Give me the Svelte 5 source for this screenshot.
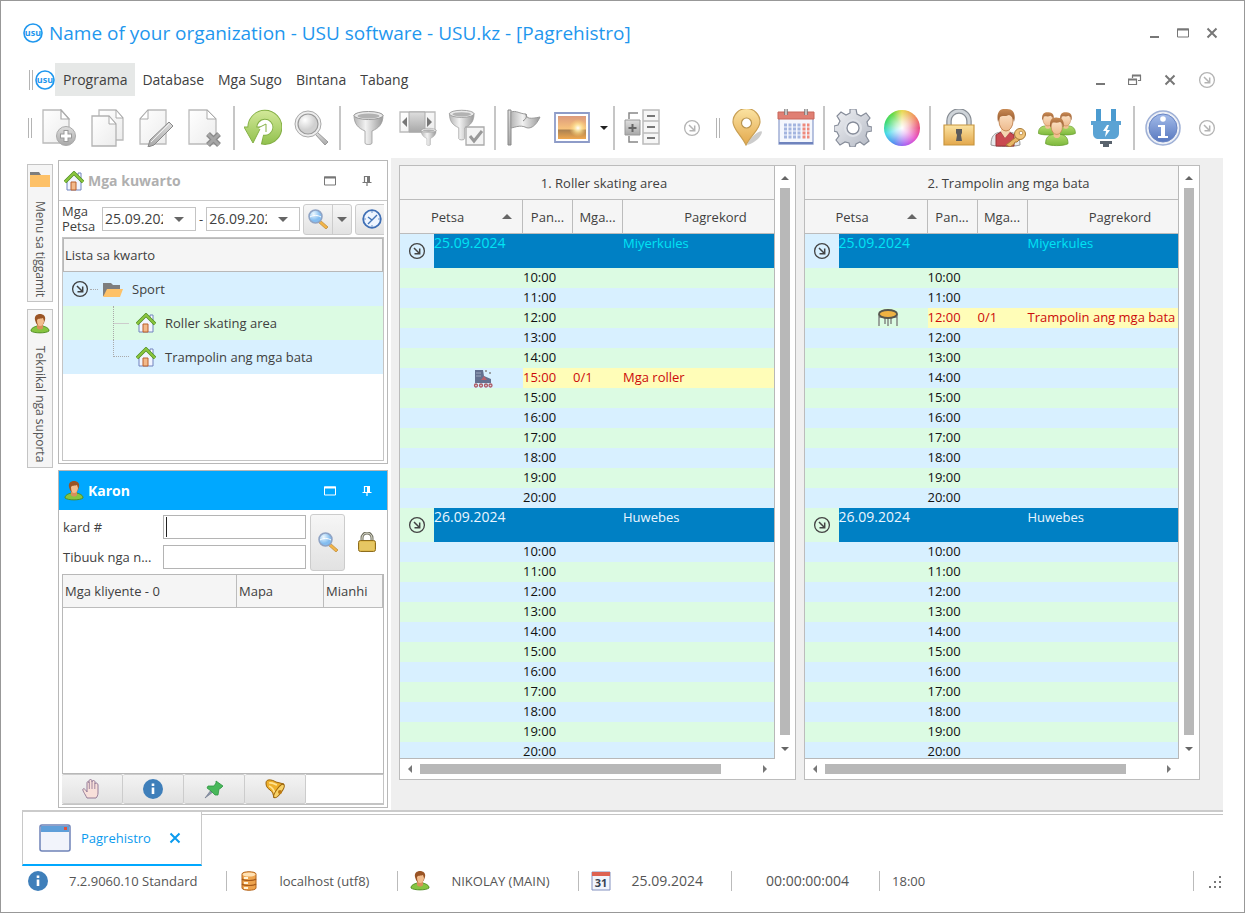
<script lang="ts">
  type Slot = { time: string; count?: string; note?: string; icon?: string };
  type Day = { date: string; weekday: string; today: boolean; slots: Slot[] };
  type Room = { id: number; title: string; days: Day[] };

  const menus = ['Programa', 'Database', 'Mga Sugo', 'Bintana', 'Tabang'];

  const mainTools = [
    ['new', 'copy', 'edit', 'delete'],
    ['refresh', 'search'],
    ['filter', 'filterColumn', 'filterCheck'],
    ['flag', 'picture'],
    ['tree', 'more']
  ];

  const serviceTools = [
    ['pin', 'calendar'],
    ['gear', 'wheel'],
    ['lock', 'userKey', 'users', 'plug'],
    ['info']
  ];

  const footerTools = ['hand', 'infoFlat', 'pushpin', 'bell'];

  function hours(booked?: Slot): Slot[] {
    const list: Slot[] = [];
    for (let h = 10; h <= 20; h++) {
      const time = `${h}:00`;
      if (booked && booked.time === time) list.push(booked);
      list.push({ time });
    }
    return list;
  }

  function makeDays(booked: Slot): Day[] {
    return [
      { date: '25.09.2024', weekday: 'Miyerkules', today: true, slots: hours(booked) },
      { date: '26.09.2024', weekday: 'Huwebes', today: false, slots: hours() }
    ];
  }

  const rooms: Room[] = [
    {
      id: 1,
      title: 'Roller skating area',
      days: makeDays({ time: '15:00', count: '0/1', note: 'Mga roller', icon: 'skate' })
    },
    {
      id: 2,
      title: 'Trampolin ang mga bata',
      days: makeDays({ time: '12:00', count: '0/1', note: 'Trampolin ang mga bata', icon: 'trampoline' })
    }
  ];

  let dateFrom = $state('25.09.2024');
  let dateTo = $state('26.09.2024');
  let cardNumber = $state('');
  let fullName = $state('');
  let treeOpen = $state(true);
</script>

<!-- shared gradients for the icons -->
<svg class="defs" width="0" height="0" aria-hidden="true">
  <defs>
    <linearGradient id="paper" x1="0" y1="0" x2="1" y2="1"><stop offset="0" stop-color="#fff" /><stop offset="1" stop-color="#ececec" /></linearGradient>
    <linearGradient id="steel" x1="0" y1="0" x2="1" y2="0"><stop offset="0" stop-color="#b5b5b5" /><stop offset=".4" stop-color="#f2f2f2" /><stop offset="1" stop-color="#999" /></linearGradient>
    <linearGradient id="grey" x1="0" y1="0" x2="0" y2="1"><stop offset="0" stop-color="#dedede" /><stop offset="1" stop-color="#a8a8a8" /></linearGradient>
    <linearGradient id="green" x1="0" y1="0" x2="0" y2="36" gradientUnits="userSpaceOnUse"><stop offset="0" stop-color="#d5ea9c" /><stop offset="1" stop-color="#90c04c" /></linearGradient>
    <linearGradient id="gold" x1="0" y1="0" x2="0" y2="1"><stop offset="0" stop-color="#fbe3a2" /><stop offset="1" stop-color="#e3a84c" /></linearGradient>
    <linearGradient id="gear" x1="0" y1="0" x2="1" y2="1"><stop offset="0" stop-color="#f0f1f4" /><stop offset="1" stop-color="#b4b9c4" /></linearGradient>
    <linearGradient id="blue" x1="0" y1="0" x2="0" y2="1"><stop offset="0" stop-color="#a4bcea" /><stop offset="1" stop-color="#5878bf" /></linearGradient>
    <linearGradient id="shirt" x1="0" y1="0" x2="0" y2="1"><stop offset="0" stop-color="#b2dc6c" /><stop offset="1" stop-color="#7db83c" /></linearGradient>
    <linearGradient id="hair" x1="0" y1="0" x2="0" y2="1"><stop offset="0" stop-color="#c98b55" /><stop offset="1" stop-color="#94572c" /></linearGradient>
    <linearGradient id="skin" x1="0" y1="0" x2="0" y2="1"><stop offset="0" stop-color="#fde6cb" /><stop offset="1" stop-color="#edb98c" /></linearGradient>
    <linearGradient id="sunset" x1="0" y1="0" x2="0" y2="1"><stop offset="0" stop-color="#dc9a7c" /><stop offset=".55" stop-color="#f7c27c" /><stop offset=".62" stop-color="#ad8352" /><stop offset="1" stop-color="#efa850" /></linearGradient>
    <radialGradient id="glow"><stop offset="0" stop-color="#fff" /><stop offset=".4" stop-color="#ffe9a0" stop-opacity=".8" /><stop offset="1" stop-color="#ffd070" stop-opacity="0" /></radialGradient>
    <radialGradient id="lens" cx=".35" cy=".3"><stop offset="0" stop-color="#fff" /><stop offset="1" stop-color="#d0d0d0" /></radialGradient>
    <radialGradient id="lensBlue" cx=".35" cy=".3"><stop offset="0" stop-color="#eef9ff" /><stop offset="1" stop-color="#83bdf0" /></radialGradient>
  </defs>
</svg>

{#snippet logo()}
  <svg class="logo" width="20" height="20" viewBox="0 0 20 20" aria-hidden="true">
    <circle cx="10" cy="10" r="9" fill="#fff" stroke="#1f97ee" stroke-width="1.6" />
    <text x="10" y="13" text-anchor="middle" font-size="9" font-weight="bold" fill="#1f97ee">usu</text>
  </svg>
{/snippet}

{#snippet circleArrow()}
  <svg width="18" height="18" viewBox="0 0 18 18" aria-hidden="true" fill="none" stroke="currentColor">
    <circle cx="9" cy="9" r="7.4" stroke-width="1.3" />
    <path d="M6 6l5 5M11.7 6.5v5.2H6.5" stroke-width="1.5" />
  </svg>
{/snippet}

{#snippet funnel()}
  <path d="M4 6c0 9 4 13 11 16v12c0 2 7 2 7 0V22c7-3 11-7 11-16z" fill="url(#steel)" stroke="#999" stroke-width=".8" />
  <ellipse cx="18.5" cy="6.5" rx="14.5" ry="4" fill="#e9e9e9" stroke="#999" />
  <ellipse cx="18.5" cy="7" rx="11" ry="2.4" fill="#b2b2b2" />
{/snippet}

{#snippet person()}
  <path d="M2 33c0-7 3-10 9-11h10c6 1 9 4 9 11-6 3-22 3-28 0z" fill="url(#shirt)" stroke="#679e2d" />
  <path d="M12 20h8v4c-2 3-6 3-8 0z" fill="#f0c193" />
  <ellipse cx="16" cy="13" rx="7" ry="9" fill="url(#skin)" stroke="#b8763f" stroke-width=".7" />
  <path d="M8 14C6 4 11 1 17 2c7 0 9 6 7 12-1-4-1-6-4-7-4 2-8 0-10 1-1 2-1 4-2 6z" fill="url(#hair)" />
{/snippet}

{#snippet toolIcon(name: string)}
  <svg width="38" height="38" viewBox="0 0 38 38" aria-hidden="true">
    {#if name === 'new'}
      <path d="M3 1h18l8 9v24H3z" fill="url(#paper)" stroke="#bbb" stroke-width="1.3" />
      <path d="M21 1v9h8z" fill="#fff" stroke="#aaa" stroke-width="1.2" />
      <circle cx="26" cy="27" r="9.5" fill="url(#grey)" stroke="#aaa" />
      <path d="M26 21v12M20 27h12" stroke="#999" stroke-width="5" />
      <path d="M26 22v10M21 27h10" stroke="#fff" stroke-width="3" />
    {:else if name === 'copy'}
      <path d="M10 1h17l7 8v22H10z" fill="url(#paper)" stroke="#bbb" stroke-width="1.3" />
      <path d="M27 1v8h7z" fill="#fff" stroke="#aaa" />
      <path d="M3 7h17l7 8v22H3z" fill="url(#paper)" stroke="#b3b3b3" stroke-width="1.3" />
      <path d="M20 7v8h7z" fill="#fff" stroke="#aaa" />
    {:else if name === 'edit'}
      <path d="M10 1h18v34H2V10z" fill="url(#paper)" stroke="#bbb" stroke-width="1.3" />
      <path d="M10 1v9H2z" fill="#fff" stroke="#aaa" />
      <path d="M31 13l4 4-19 19-6 2 2-7z" fill="url(#grey)" stroke="#888" />
      <path d="M31 15L13 33" stroke="#eee" />
    {:else if name === 'delete'}
      <path d="M2 1h18l9 9v25H2z" fill="url(#paper)" stroke="#bbb" stroke-width="1.3" />
      <path d="M20 1v9h9z" fill="#fff" stroke="#aaa" />
      <path d="M21 25l11 11M32 25L21 36" stroke="#8a8a8a" stroke-width="5.5" />
      <path d="M21 25l11 11M32 25L21 36" stroke="#a6a6a6" stroke-width="3" />
    {:else if name === 'refresh'}
      <path d="M8.500 20a12.500 12.500 0 1 1 9.500 10.500" fill="none" stroke="#85b046" stroke-width="10" />
      <path d="M0 18h17L9 34z" fill="url(#green)" stroke="#85b046" />
      <path d="M8.500 20a12.500 12.500 0 1 1 10.500 10.500" fill="none" stroke="url(#green)" stroke-width="8" />
      <path d="M14 19l8-4v8" fill="#fff" stroke="#85b046" />
    {:else if name === 'search'}
      <path d="M24 23l11 10-3 3-10-11z" fill="url(#grey)" stroke="#999" />
      <circle cx="15" cy="15" r="13" fill="#eee" stroke="#aaa" />
      <circle cx="15" cy="15" r="10" fill="url(#lens)" stroke="#999" stroke-width="1.2" />
    {:else if name === 'filter'}
      {@render funnel()}
    {:else if name === 'filterColumn'}
      <path d="M1 3h35v20H1z" fill="url(#paper)" stroke="#bbb" stroke-width="1.3" />
      <path d="M10 3h16v20H10z" fill="url(#grey)" stroke="#aaa" />
      <path d="M8 8v10l-5-5zM28 8v10l5-5z" fill="#777" />
      <g transform="translate(20 18) scale(.52)">{@render funnel()}</g>
    {:else if name === 'filterCheck'}
      <g transform="translate(-2 -1) scale(.85 .9)">{@render funnel()}</g>
      <path d="M18 18h18v18H18z" fill="#f4f4f4" stroke="#aaa" stroke-width="1.3" />
      <path d="M22 27l4 5 8-10" fill="none" stroke="#999" stroke-width="3" />
    {:else if name === 'flag'}
      <path d="M3 1h3v35H3z" fill="url(#grey)" stroke="#888" />
      <path d="M6 3c5-2 9 2 15 2 0 5 5 5 14 3-4 9-10 13-15 10-5-2-9 0-14 1z" fill="url(#steel)" stroke="#999" />
      <path d="M21 5c1 3 0 5-3 7" fill="none" stroke="#888" />
    {:else if name === 'picture'}
      <path d="M1 4h34v29H1z" fill="#fff" stroke="#8e9cc8" stroke-width="1.8" />
      <path d="M4 7h28v23H4z" fill="url(#sunset)" />
      <circle cx="24" cy="19" r="9" fill="url(#glow)" />
    {:else if name === 'tree'}
      <path d="M14 4H5v6M14 33H5v-6" fill="none" stroke="#888" stroke-width="1.5" />
      <path d="M1 11h15v15H1z" fill="url(#grey)" stroke="#999" />
      <path d="M8.5 15v8M4.5 19h8" stroke="#666" stroke-width="2" />
      <path d="M19 1h16v34H19zM19 12h16M19 24h16" fill="#f6f6f6" stroke="#bbb" stroke-width="1.5" />
      <path d="M23 7h8M23 18h8M23 29h8" stroke="#777" stroke-width="2" />
    {:else if name === 'pin'}
      <path d="M19 36c3-9 15-16 15-13s-6 11-15 13z" fill="#aaa" opacity=".6" />
      <path d="M18 36C13 26 5 20 5 13a13 13 0 0 1 27 0c0 7-9 13-14 23z" fill="url(#gold)" stroke="#c9a055" stroke-width="1.2" />
      <circle cx="18.5" cy="14" r="5" fill="#fff" stroke="#b99550" stroke-width="1.2" />
    {:else if name === 'calendar'}
      <path d="M2 4h34v31H2z" fill="#f4f7fd" stroke="#93a3cf" stroke-width="1.3" />
      <path d="M1 3h36v7H1z" fill="#e07f73" stroke="#c8675b" />
      <path d="M2 34h34" stroke="#6f83bd" stroke-width="2" />
      <path d="M7 16h18M7 20h18M7 24h18M7 28h18" stroke="#a3b5df" stroke-width="3" stroke-dasharray="3 1.5" />
      <path d="M25.5 16h7M25.5 20h7M25.5 24h7M25.5 28h7" stroke="#ee8a7c" stroke-width="3" stroke-dasharray="3 1.5" />
      <path d="M9 0v6M29 0v6" stroke="#777" stroke-width="3.5" />
      <path d="M9 0v6M29 0v6" stroke="#ddd" stroke-width="1.5" />
    {:else if name === 'gear'}
      <path d="M16 0h6l1 5 4 2 5-3 4 5-3 4 1 4 4 1v4l-5 1-1 4 3 5-5 4-4-3-4 2-1 3h-5l-1-4-4-1-5 3-4-5 3-4-2-4-3-1v-5l4-1 2-4-3-5 4-4 5 3 4-2z" fill="url(#gear)" stroke="#868c99" stroke-width="1.2" />
      <circle cx="19" cy="19" r="6" fill="#fff" stroke="#868c99" stroke-width="1.3" />
      <circle cx="19" cy="19" r="8" fill="none" stroke="#dfe2e8" stroke-width="2" />
    {:else if name === 'info'}
      <circle cx="19" cy="19" r="17" fill="#eceff6" stroke="#9eb0d6" stroke-width="1.5" />
      <circle cx="19" cy="19" r="14" fill="url(#blue)" stroke="#6a86c4" />
      <circle cx="19" cy="10" r="2.8" fill="#fff" />
      <path d="M14 16h7v11h3v2H14v-2h3v-9h-3z" fill="#fff" />
    {:else if name === 'lock'}
      <path d="M9 20v-8a10 10 0 0 1 20 0v8" fill="none" stroke="#878d94" stroke-width="5.5" />
      <path d="M9 20v-8a10 10 0 0 1 20 0v8" fill="none" stroke="#cfd4d9" stroke-width="3" />
      <path d="M4 16h30v20H4z" fill="url(#gold)" stroke="#c8963f" stroke-width="1.2" />
      <path d="M16 20h6v4l-1 2 1 6h-6l1-6-1-2z" fill="#5b5b5b" />
    {:else if name === 'userKey'}
      <path d="M2 36c0-9 3-12 10-13h8c7 1 11 4 11 13-7 2-22 2-29 0z" fill="#e8e9ec" stroke="#999" />
      <path d="M7 26l5-3 4 6 4-6 5 3v11H7z" fill="#c94a50" stroke="#9b3439" />
      <path d="M12 20h9v3l-5 6-4-6z" fill="#f5d5b0" />
      <ellipse cx="17" cy="12" rx="7" ry="10" fill="url(#skin)" stroke="#b8763f" stroke-width=".8" />
      <path d="M9 13C7 3 11-1 18 0c7 0 9 6 7 13-1-4-2-6-5-7-4 2-7 0-9 2-1 1-1 3-2 5z" fill="url(#hair)" />
      <path d="M27 28l-10 8 4 2 4-3 1-2h2l3-3z" fill="#e8b565" stroke="#a77935" />
      <circle cx="31" cy="25" r="5.5" fill="#f0c57b" stroke="#a77935" />
      <circle cx="32" cy="24" r="1.8" fill="#fff" stroke="#a77935" stroke-width=".7" />
    {:else if name === 'users'}
      <g transform="translate(-1 2) scale(.68)">{@render person()}</g>
      <g transform="translate(17 2) scale(.68)">{@render person()}</g>
      <g transform="translate(6 7) scale(.8 .84)">{@render person()}</g>
    {:else if name === 'plug'}
      <path d="M9 0h5v12H9zM24 0h5v12h-5z" fill="#4b9bd0" />
      <path d="M4 12h30v4h-2v8c0 4-3 6-6 6H12c-4 0-6-2-6-6v-8H4z" fill="#5ba3d4" />
      <path d="M20 16l-4 6h3l-1 6 5-7h-3l2-5z" fill="#fff" />
      <path d="M13 32h12v3h-3v3h-6v-3h-3z" fill="#59636d" />
    {/if}
  </svg>
{/snippet}

{#snippet smallIcon(name: string)}
  <svg width="20" height="20" viewBox="0 0 20 20" aria-hidden="true">
    {#if name === 'house'}
      <path d="M14 2h3v5h-3z" fill="#fff" stroke="#7183be" />
      <path d="M3 9l7-6 7 6v10H3z" fill="#f1f5ff" stroke="#7183be" />
      <path d="M7 11h5v8H7z" fill="#f3b98a" stroke="#b9602c" />
      <path d="M1 11l9-9 9 9" fill="none" stroke="#4c8d22" stroke-width="3.4" />
      <path d="M1 11l9-9 9 9" fill="none" stroke="#8cc63e" stroke-width="2" />
    {:else if name === 'person'}
      <path d="M1 17c0-3 3-4 6-5h6c3 1 6 2 6 5-3 2.500-15 2.500-18 0z" fill="#86c440" stroke="#4d8a1f" stroke-width=".9" />
      <path d="M7 10h6v4c-1 2-5 2-6 0z" fill="#d98f5a" />
      <path d="M5 6c-1-4 2-6 5-6s6 2 5 6l-1 3c-1 3-7 3-8 0z" fill="#9a5425" />
      <path d="M7 6c1-2 4-1 6-2l1 3c0 3-2 5-4 5s-3-2-3-6z" fill="#f2bd8e" />
    {:else if name === 'folder'}
      <path d="M0 4h8l2 2h7v11H0z" fill="#7e7e7e" />
      <path d="M4 10h16l-3 8H0z" fill="#fdc168" />
    {:else if name === 'closedFolder'}
      <path d="M0 3h9l2 3h9v4H0z" fill="#7e7e7e" />
      <path d="M0 6h20v12H0z" fill="#fdc168" />
    {:else if name === 'lens'}
      <path d="M12 11l8 7-2 2-8-7z" fill="#f3b548" stroke="#b98636" stroke-width=".7" />
      <circle cx="7.5" cy="7.5" r="6.5" fill="url(#lensBlue)" stroke="#8fa3c4" stroke-width="1.5" />
      <path d="M2 8c3-2 8-2 11 0" stroke="#fff" fill="none" />
    {:else if name === 'clock'}
      <circle cx="10" cy="10" r="8.8" fill="#eef5ff" stroke="#3f6fb5" stroke-width="1.8" />
      <path d="M10 2v2M10 16v2M2 10h2M16 10h2" stroke="#6b93c9" />
      <path d="M6 8l4 3 5-5M10 11l-4 4" fill="none" stroke="#4576b8" stroke-width="1.4" />
    {:else if name === 'lock'}
      <path d="M5 10V6a5 5 0 0 1 10 0v4" fill="none" stroke="#6d6d5e" stroke-width="3" />
      <path d="M5 10V6a5 5 0 0 1 10 0v4" fill="none" stroke="#e5e5d5" stroke-width="1" />
      <rect x="1.5" y="8.5" width="17" height="11" rx="2" fill="#dfbb4f" stroke="#8e6d1d" />
      <path d="M3 11h14M3 13h14M3 15h14M3 17h14" stroke="#f0d984" stroke-width=".8" />
    {:else if name === 'hand'}
      <path d="M5 19C3 15 0 11 1 10s3 1 4 3V4c0-2 2-2 2 0V2c0-2 3-2 3 0v1c0-2 3-2 3 0v2c0-2 3-1 3 1v8c0 2-1 4-2 5z" fill="#f8e0da" stroke="#8b7190" stroke-width=".9" />
      <path d="M7.3 4v6M10 3v7M12.8 5v5" stroke="#8b7190" stroke-width=".8" />
    {:else if name === 'infoFlat'}
      <circle cx="10" cy="10" r="10" fill="#3f7fba" />
      <path d="M8.7 4.5h2.6V7H8.7zM8.7 8.5h2.6V15H8.7z" fill="#fff" />
    {:else if name === 'pushpin'}
      <path d="M1 19l6-8 2 2z" fill="#8a95a8" stroke="#697488" stroke-width=".6" />
      <path d="M12 2l7 5-2 2-2 1-1 6-3 0-4-4-4-3 1-2h6l2-3z" fill="#48b85a" stroke="#2f9543" stroke-width=".8" />
    {:else if name === 'bell'}
      <path d="M1 4c0-4 5-4 10-1 3 1 5 1 8 2L9 19c-1-4-1-6-4-8C2 9 1 7 1 4z" fill="#eeb02c" stroke="#9a640c" />
      <path d="M4 4c3-1 5 1 8 2M4 7c3 1 5 4 6 8" fill="none" stroke="#ffe391" stroke-width="1.8" />
      <ellipse cx="14" cy="12" rx="8" ry="2.6" transform="rotate(-54 14 12)" fill="#f8d268" stroke="#9a640c" />
      <circle cx="15" cy="13" r="2" fill="#c07c14" />
    {:else if name === 'database'}
      <path d="M3 3c0-3 14-3 14 0v14c0 3-14 3-14 0z" fill="#eda34e" stroke="#b4651c" />
      <ellipse cx="10" cy="3.5" rx="6.5" ry="2" fill="#ffe1b4" />
      <path d="M3 8c2 2 12 2 14 0M3 13c2 2 12 2 14 0" fill="none" stroke="#a65a19" stroke-width="1.2" />
      <path d="M5 7h4M5 12h4M5 17h4" stroke="#fff4d9" stroke-width="2" />
    {:else if name === 'date'}
      <path d="M1 1h18v18H1z" fill="#f2f5fc" stroke="#8391c0" />
      <path d="M1 1h18v4H1z" fill="#dd6252" />
      <text x="10" y="16" text-anchor="middle" font-size="11" font-weight="bold" fill="#374152">31</text>
    {:else if name === 'skate'}
      <path d="M2 2h8l1 6 7 3v4H2z" fill="#64708f" />
      <path d="M3 5h5M3 8h5" stroke="#9ba5bc" />
      <path d="M8 12l3-4 3 4z" fill="#b8616c" />
      <circle cx="13" cy="3" r="1" fill="#888" /><circle cx="17" cy="5" r="1" fill="#888" />
      <g fill="#ddd" stroke="#ac5966" stroke-width="1.3"><circle cx="3" cy="17.5" r="1.5" /><circle cx="8" cy="17.5" r="1.5" /><circle cx="13" cy="17.5" r="1.5" /><circle cx="17.5" cy="17.5" r="1.5" /></g>
    {:else if name === 'trampoline'}
      <path d="M1 6v12M19 6v12M7 10v6M13 10v6M10 10v8M1 9h18" stroke="#777" fill="none" stroke-width="1.3" />
      <ellipse cx="10" cy="6" rx="9" ry="4" fill="#efb243" stroke="#57564c" stroke-width="1.8" />
    {/if}
  </svg>
{/snippet}

{#snippet paneButtons()}
  <button class="plain" aria-label="Maximize">
    <svg width="12" height="10" viewBox="0 0 12 10"><path d="M.5 1h11v8H.5z" fill="none" stroke="currentColor" /><path d="M0 1.5h12" stroke="currentColor" stroke-width="2" /></svg>
  </button>
  <button class="plain" aria-label="Pin">
    <svg width="10" height="10" viewBox="0 0 10 10"><path d="M2.5 0v6M2 .5h6M.5 6.5h9M5 6v4" fill="none" stroke="currentColor" stroke-width="1.2" /><path d="M5 0h3v6H5z" fill="currentColor" /></svg>
  </button>
{/snippet}

{#snippet closeMark()}
  <svg width="12" height="12" viewBox="0 0 12 12"><path d="M1.500 1.500l9 9M10.500 1.500l-9 9" stroke="currentColor" stroke-width="2" /></svg>
{/snippet}

{#snippet toolButton(name: string)}
  {#if name === 'more'}
    <button class="tool faint" aria-label="more">{@render circleArrow()}</button>
  {:else}
    <button class="tool" aria-label={name}>
      {#if name === 'wheel'}
        <span class="wheel"></span>
      {:else}
        {@render toolIcon(name)}
      {/if}
    </button>
  {/if}
  {#if name === 'picture'}
    <button class="tool-drop" aria-label="Picture options"><span class="tri down dark"></span></button>
  {/if}
{/snippet}

<div class="app">
  <header class="title-bar">
    {@render logo()}
    <h1>Name of your organization - USU software - USU.kz - [Pagrehistro]</h1>
    <div class="window-buttons">
      <button class="plain" aria-label="Minimize"><svg width="12" height="12" viewBox="0 0 12 12"><path d="M2 10h9" stroke="currentColor" stroke-width="2" /></svg></button>
      <button class="plain" aria-label="Maximize"><svg width="12" height="12" viewBox="0 0 12 12"><path d="M.5 2h11v8H.5z" fill="none" stroke="currentColor" /><path d="M0 2.5h12" stroke="currentColor" stroke-width="2" /></svg></button>
      <button class="plain" aria-label="Close">{@render closeMark()}</button>
    </div>
  </header>

  <nav class="menu-bar">
    <span class="handle"></span>
    {@render logo()}
    {#each menus as menu, i}
      <button class="menu-item" class:current={i === 0}>{menu}</button>
    {/each}
    <div class="child-buttons">
      <button class="plain" aria-label="Minimize page"><svg width="12" height="12" viewBox="0 0 12 12"><path d="M2 10h9" stroke="currentColor" stroke-width="2" /></svg></button>
      <button class="plain" aria-label="Restore page"><svg width="14" height="12" viewBox="0 0 14 12"><path d="M4.5 4V1.5h8v5H10M.5 5.5h8v5h-8z" fill="none" stroke="currentColor" stroke-width="1.2" /><path d="M4 1.5h9M0 5.5h9" stroke="currentColor" stroke-width="2" /></svg></button>
      <button class="plain" aria-label="Close page">{@render closeMark()}</button>
      <button class="plain faint" aria-label="Menu options">{@render circleArrow()}</button>
    </div>
  </nav>

  <div class="toolbar">
    <span class="handle"></span>
    {#each mainTools as group, i}
      {#if i > 0}<span class="divider"></span>{/if}
      {#each group as name}
        {@render toolButton(name)}
      {/each}
    {/each}
    <span class="handle"></span>
    {#each serviceTools as group, i}
      {#if i > 0}<span class="divider"></span>{/if}
      {#each group as name}
        {@render toolButton(name)}
      {/each}
    {/each}
    <button class="plain faint last" aria-label="Toolbar options">{@render circleArrow()}</button>
  </div>

  <main>
    <div class="side-tabs">
      <button class="side-tab">{@render smallIcon('closedFolder')}<span>Menu sa tiggamit</span></button>
      <button class="side-tab">{@render smallIcon('person')}<span>Teknikal nga suporta</span></button>
    </div>

    <div class="docks">
      <section class="dock rooms">
        <div class="dock-head">
          {@render smallIcon('house')}
          <h2>Mga kuwarto</h2>
          {@render paneButtons()}
        </div>
        <div class="date-row">
          <label for="date-from">Mga Petsa</label>
          <div class="date-box">
            <input id="date-from" type="text" bind:value={dateFrom} />
            <button class="plain" aria-label="Choose start"><span class="tri down"></span></button>
          </div>
          <span class="dash">-</span>
          <div class="date-box">
            <input aria-label="Mga Petsa -" type="text" bind:value={dateTo} />
            <button class="plain" aria-label="Choose end"><span class="tri down"></span></button>
          </div>
          <div class="split">
            <button class="split-main" aria-label="Search">{@render smallIcon('lens')}</button>
            <button class="split-drop" aria-label="Search options"><span class="tri down"></span></button>
          </div>
          <button class="clock" aria-label="Now">{@render smallIcon('clock')}</button>
        </div>
        <div class="room-list">
          <div class="list-head">Lista sa kwarto</div>
          <div class="tree-row">
            <button class="plain toggle" aria-label="Toggle Sport" onclick={() => (treeOpen = !treeOpen)}>{@render circleArrow()}</button>
            <span class="twig"></span>
            {@render smallIcon('folder')}
            <span>Sport</span>
          </div>
          {#if treeOpen}
            {#each rooms as room}
              <div class="tree-row child">
                <span class="branch"></span>
                {@render smallIcon('house')}
                <span>{room.title}</span>
              </div>
            {/each}
          {/if}
        </div>
      </section>

      <section class="dock now">
        <div class="dock-head">
          {@render smallIcon('person')}
          <h2>Karon</h2>
          {@render paneButtons()}
        </div>
        <div class="client-form">
          <div class="fields">
            <label for="card">kard #</label>
            <div class="field focused"><input id="card" type="text" bind:value={cardNumber} /></div>
            <label for="full-name">Tibuuk nga n...</label>
            <div class="field"><input id="full-name" type="text" bind:value={fullName} /></div>
          </div>
          <button class="find" aria-label="Find client">{@render smallIcon('lens')}</button>
          <button class="plain" aria-label="Lock">{@render smallIcon('lock')}</button>
        </div>
        <div class="clients">
          <table>
            <colgroup><col /><col class="map" /><col class="came" /></colgroup>
            <thead>
              <tr><th>Mga kliyente - 0</th><th>Mapa</th><th>Mianhi</th></tr>
            </thead>
          </table>
        </div>
        <div class="client-tools">
          {#each footerTools as name}
            <button aria-label={name}>{@render smallIcon(name)}</button>
          {/each}
          <span class="rest"></span>
        </div>
      </section>
    </div>

    <div class="workspace">
      {#each rooms as room}
        <section class="room">
          <div class="view">
            <table>
              <colgroup>
                <col class="c-toggle" /><col class="c-date" /><col class="c-time" /><col class="c-time" /><col />
              </colgroup>
              <thead>
                <tr><th colspan="5">{room.id}. {room.title}</th></tr>
                <tr>
                  <th colspan="2"><span class="sorted">Petsa <span class="tri up"></span></span></th>
                  <th>Pan...</th>
                  <th>Mga...</th>
                  <th>Pagrekord</th>
                </tr>
              </thead>
              <tbody>
                {#each room.days as day}
                  <tr class="day" class:today={day.today}>
                    <td class="toggle-cell"><button class="plain" aria-label="Toggle {day.date}">{@render circleArrow()}</button></td>
                    <td class="digits" colspan="3">{day.date}</td>
                    <td>{day.weekday}</td>
                  </tr>
                  {#each day.slots as slot}
                    <tr class:booked={slot.note}>
                      <td class="slot-icon" colspan="2">
                        {#if slot.icon}{@render smallIcon(slot.icon)}{/if}
                      </td>
                      <td>{slot.time}</td>
                      <td>{slot.count ?? ''}</td>
                      <td>{slot.note ?? ''}</td>
                    </tr>
                  {/each}
                {/each}
              </tbody>
            </table>
          </div>
          <div class="scroll vertical">
            <span class="tri up small"></span>
            <span class="thumb"></span>
            <span class="tri down small"></span>
          </div>
          <div class="scroll horizontal">
            <span class="tri left small"></span>
            <span class="track"><span class="thumb"></span></span>
            <span class="tri right small"></span>
          </div>
        </section>
      {/each}
    </div>
  </main>

  <div class="page-tabs">
    <div class="page-tab">
      <svg width="32" height="28" viewBox="0 0 32 28" aria-hidden="true">
        <rect x="1" y="1" width="30" height="26" rx="2" fill="#f2f4fb" stroke="#6f83b8" stroke-width="1.5" />
        <path d="M2 2h28v6H2z" fill="#5f9fd9" />
        <path d="M25 3h3v3h-3z" fill="#e2503c" />
      </svg>
      <a href="#pagrehistro">Pagrehistro</a>
      <button class="plain" aria-label="Close tab">{@render closeMark()}</button>
    </div>
  </div>

  <footer class="status-bar">
    <div class="status first">{@render smallIcon('infoFlat')}<span>7.2.9060.10 Standard</span></div>
    <div class="status">{@render smallIcon('database')}<span>localhost (utf8)</span></div>
    <div class="status">{@render smallIcon('person')}<span>NIKOLAY (MAIN)</span></div>
    <div class="status">{@render smallIcon('date')}<span class="digits">25.09.2024</span></div>
    <div class="status timer"><span class="digits">00:00:00:004</span></div>
    <div class="status"><span>18:00</span></div>
    <div class="status grip">
      <svg width="16" height="16" viewBox="0 0 16 16" fill="#777" aria-hidden="true"><path d="M12 1h2v2h-2zM7 6h2v2H7zM12 6h2v2h-2zM2 11h2v2H2zM7 11h2v2H7zM12 11h2v2h-2z" /></svg>
    </div>
  </footer>
</div>

<style>
  :global(body) {
    background: #fff;
  }

  .app,
  .app * {
    box-sizing: border-box;
  }

  .app {
    display: flex;
    flex-direction: column;
    height: 100vh;
    border: 1px solid #989898;
    background: #fff;
    color: #404040;
    font-family: 'Open Sans', 'Noto Sans', sans-serif;
    font-size: 13px;
    line-height: 18px;
  }

  .defs {
    position: absolute;
  }

  svg {
    display: block;
    flex: none;
  }

  button,
  input {
    font: inherit;
    color: inherit;
  }

  button {
    display: flex;
    align-items: center;
    justify-content: center;
    padding: 0;
  }

  .plain {
    border: none;
    background: none;
  }

  .faint {
    color: #b4b4b4;
  }

  .digits {
    font-size: 14px;
  }

  .handle {
    flex: none;
    width: 4px;
    height: 20px;
    border: solid #b4b4b4;
    border-width: 0 1px;
  }

  .tri {
    display: inline-block;
    flex: none;
    border: 5px solid transparent;
  }

  .tri.down {
    border-top-color: #666;
    border-bottom: none;
  }

  .tri.up {
    border-bottom-color: #666;
    border-top: none;
  }

  .tri.left {
    border-right-color: #777;
    border-left: none;
  }

  .tri.right {
    border-left-color: #777;
    border-right: none;
  }

  .tri.small {
    border-width: 4px;
  }

  .tri.dark {
    border-width: 4px;
    border-top-color: #222;
  }

  /* title and menu */
  .title-bar {
    display: flex;
    align-items: center;
    gap: 6px;
    height: 62px;
    padding: 2px 26px 0 22px;
    color: #1f97ee;
  }

  h1 {
    margin: 0;
    font-size: 19px;
    font-weight: 400;
    line-height: 26px;
  }

  .window-buttons {
    display: flex;
    gap: 17px;
    margin-left: auto;
    color: #777;
  }

  .menu-bar {
    display: flex;
    align-items: center;
    height: 33px;
    padding: 0 20px 0 28px;
    font-size: 14px;
  }

  .menu-bar .logo {
    margin-left: 2px;
  }

  .menu-item {
    height: 33px;
    padding: 0 8px;
    border: none;
    background: none;
  }

  .menu-item.current {
    background: #e6e8e7;
  }

  .menu-item:not(.current) {
    padding: 0 7px;
  }

  .child-buttons {
    display: flex;
    align-items: center;
    gap: 22px;
    margin-left: auto;
    padding-right: 8px;
    color: #777;
  }

  /* toolbar */
  .toolbar {
    display: flex;
    align-items: center;
    height: 62px;
    padding: 2px 28px 0 27px;
  }

  .toolbar > .handle + .tool {
    margin-left: 2px;
  }

  .tool {
    flex: none;
    width: 49px;
    height: 44px;
    border: none;
    background: none;
  }

  .tool-drop {
    width: 13px;
    height: 44px;
    border: none;
    background: none;
  }

  .divider {
    flex: none;
    width: 2px;
    height: 44px;
    margin: 0 3px;
    background: #c6c6c6;
  }

  .toolbar .last {
    margin-left: auto;
  }

  .wheel {
    width: 36px;
    height: 36px;
    border-radius: 50%;
    background:
      radial-gradient(circle, #fff 0, rgba(255, 255, 255, 0.7) 25%, rgba(255, 255, 255, 0) 70%),
      conic-gradient(#e8d84a, #f08a5a 50deg, #e8487c 90deg, #e64cc8 130deg, #a85cf0 170deg, #4c8cf0 210deg, #3cd8e8 250deg, #34d86c 290deg, #58d83c 325deg, #e8d84a);
  }

  /* side area */
  main {
    flex: 1;
    display: flex;
    min-height: 0;
    padding: 0 21px 0 26px;
  }

  .side-tabs {
    display: flex;
    flex-direction: column;
    align-items: flex-start;
    gap: 7px;
    width: 26px;
    padding-top: 6px;
  }

  .side-tab {
    writing-mode: vertical-rl;
    width: 26px;
    gap: 12px;
    padding: 4px 0;
    border: 1px solid #c4c4c4;
    background: #f5f5f5;
    color: #555;
    font-size: 12px;
  }

  .docks {
    display: flex;
    flex-direction: column;
    gap: 6px;
    width: 330px;
    margin: 2px 3px 2px 5px;
  }

  .dock {
    display: flex;
    flex-direction: column;
    padding: 0 3px 2px;
    border: 1px solid #b8b8b8;
  }

  .rooms {
    height: 304px;
  }

  .now {
    flex: 1;
    min-height: 0;
  }

  .dock-head {
    display: flex;
    align-items: center;
    gap: 26px;
    height: 40px;
    margin: 0 -3px;
    padding: 0 15px 0 5px;
    border-bottom: 1px solid #c8c8c8;
    color: #777;
  }

  .dock-head h2 {
    flex: 1;
    margin: 0 0 0 -22px;
    color: #b0b0b0;
    font-size: 14px;
    font-weight: 700;
  }

  .now .dock-head {
    height: 39px;
    border-bottom: none;
    background: #00a8ff;
    color: #fff;
  }

  .now .dock-head h2 {
    color: #fff;
  }

  .date-row {
    display: flex;
    align-items: center;
    gap: 3px;
    height: 36px;
    overflow: hidden;
  }

  .date-row label {
    flex: none;
    width: 37px;
    line-height: 15px;
  }

  .date-box {
    display: flex;
    flex: none;
    width: 94px;
    height: 24px;
    border: 1px solid #c4c4c4;
    background: #fff;
    font-size: 14px;
  }

  .date-box input {
    width: 60px;
    padding: 0 0 0 2px;
    border: none;
    outline: none;
    background: none;
  }

  .date-box button {
    flex: 1;
  }

  .split {
    display: flex;
    flex: none;
    height: 31px;
    border: 1px solid #ccc;
    border-radius: 3px;
    background: linear-gradient(#f6f6f6, #e2e2e2);
  }

  .split button {
    border: none;
    background: none;
  }

  .split .split-main {
    width: 28px;
  }

  .split .split-drop {
    width: 19px;
    border-left: 1px solid #ccc;
  }

  .clock {
    flex: none;
    width: 34px;
    height: 31px;
    border: 1px solid #ccc;
    border-radius: 3px;
    background: linear-gradient(#f6f6f6, #e2e2e2);
  }

  .room-list {
    flex: 1;
    border: 1px solid #c4c4c4;
  }

  .list-head {
    height: 34px;
    padding: 0 1px;
    border: 1px solid #b8b8b8;
    background: #f5f5f5;
    line-height: 33px;
  }

  .tree-row {
    display: flex;
    align-items: center;
    gap: 9px;
    height: 34px;
    padding-left: 8px;
    background: #d8f0ff;
  }

  .tree-row:nth-child(odd) {
    background: #dcfbe3;
  }

  .twig {
    width: 8px;
    margin: 0 -4px 0 -8px;
    border-top: 1px dotted #aaa;
  }

  .tree-row.child {
    padding-left: 50px;
  }

  .branch {
    align-self: stretch;
    width: 16px;
    margin: 0 -2px 17px 0;
    border: dotted #aaa;
    border-width: 0 0 1px 1px;
  }

  .tree-row:not(:last-child) .branch {
    margin-bottom: 0;
    border-bottom: none;
    background: linear-gradient(#ccc, #ccc) 0 50% / 100% 1px no-repeat;
  }

  /* current clients */
  .client-form {
    display: flex;
    align-items: center;
    gap: 4px;
    height: 64px;
  }

  .client-form > .plain {
    margin-left: 8px;
  }

  .fields {
    display: grid;
    grid-template-columns: 92px 143px;
    grid-auto-rows: 24px;
    gap: 6px 8px;
    align-items: center;
    padding-left: 1px;
  }

  .fields label {
    white-space: nowrap;
  }

  .field {
    display: flex;
    height: 24px;
    padding: 1px 2px;
    border: 1px solid #b4b4b4;
  }

  .field input {
    width: 100%;
    padding: 0 2px;
    border: none;
    outline: none;
  }

  .focused input {
    border-left: 1px solid #222;
  }

  .find {
    width: 35px;
    height: 57px;
    border: 1px solid #ccc;
    border-radius: 3px;
    background: linear-gradient(#f6f6f6, #e2e2e2);
  }

  .clients {
    flex: 1;
    border: 1px solid #b8b8b8;
  }

  table {
    width: 100%;
    border-collapse: separate;
    border-spacing: 0;
    table-layout: fixed;
  }

  th {
    height: 33px;
    padding: 0 2px;
    border: solid #bcbcbc;
    border-width: 0 1px 1px 0;
    background: #f5f5f5;
    font-weight: 400;
    text-align: left;
    white-space: nowrap;
  }

  .map {
    width: 87px;
  }

  .came {
    width: 59px;
  }

  .client-tools {
    display: flex;
    height: 31px;
    border-bottom: 1px solid #c4c4c4;
  }

  .client-tools button {
    width: 61px;
    border: 1px solid #ccc;
    border-left: none;
    border-radius: 2px;
    background: linear-gradient(#f3f3f3, #e2e2e2);
  }

  .rest {
    flex: 1;
    border: 1px solid #c4c4c4;
    border-left: none;
  }

  /* schedule windows */
  .workspace {
    flex: 1;
    display: flex;
    gap: 8px;
    min-width: 0;
    padding: 7px 23px 30px 8px;
    background: #efefef;
  }

  .room {
    flex: 1;
    display: grid;
    grid-template: minmax(0, 1fr) 20px / minmax(0, 1fr) 20px;
    min-width: 0;
    border: 1px solid #bcbcbc;
    background: #fff;
  }

  .view {
    overflow: hidden;
    border: solid #b8b8b8;
    border-width: 0 1px 1px 0;
  }

  .view table {
    min-width: 409px;
    color: #111;
  }

  .view th {
    height: 34px;
    color: #404040;
    text-align: center;
  }

  .c-toggle {
    width: 34px;
  }

  .c-date {
    width: 89px;
  }

  .c-time {
    width: 50px;
  }

  .sorted {
    display: flex;
    align-items: center;
    justify-content: space-between;
    padding: 0 8px 0 29px;
  }

  .view td {
    height: 20px;
    padding: 0;
    line-height: 18px;
    vertical-align: top;
    white-space: nowrap;
  }

  .view tbody tr {
    background: #dcfbe3;
  }

  .view tbody tr:nth-child(odd) {
    background: #d8f0ff;
  }

  .view .day td {
    height: 34px;
    background: #0080c4;
    color: #eaf6ff;
  }

  .view .today td {
    color: #00e4f4;
  }

  .view .day .toggle-cell {
    background: none;
    color: #444;
    vertical-align: middle;
  }

  .toggle-cell button {
    margin: 0 auto;
  }

  .view .slot-icon {
    padding-left: 73px;
  }

  .view .booked td:not(.slot-icon) {
    background: #fffdb8;
    color: #cc0a0a;
  }

  .scroll {
    display: flex;
    align-items: center;
    justify-content: space-between;
  }

  .thumb {
    background: #b8b8b8;
  }

  .vertical {
    flex-direction: column;
    gap: 8px;
    padding: 10px 0 8px;
  }

  .vertical .thumb {
    flex: 1;
    width: 10px;
    margin-bottom: 4px;
  }

  .horizontal {
    gap: 8px;
    padding: 0 8px;
  }

  .track {
    flex: 1;
  }

  .track .thumb {
    display: block;
    width: 90%;
    height: 10px;
  }

  /* open pages */
  .page-tabs {
    height: 56px;
    margin: 0 21px;
    border-top: 2px solid #cbcbcb;
    background: linear-gradient(#c4c4c4, #c4c4c4) 0 2px / 100% 1px no-repeat;
  }

  .page-tab {
    display: flex;
    align-items: center;
    gap: 10px;
    width: 180px;
    height: 54px;
    padding: 0 16px;
    border: solid #c8c8c8;
    border-width: 0 1px;
    border-bottom: 2px solid #00a8ff;
    background: #fff;
    color: #0b9bee;
  }

  .page-tab a {
    flex: 1;
    color: inherit;
    text-decoration: none;
  }

  .page-tab button {
    margin-right: 4px;
  }

  /* status bar */
  .status-bar {
    display: flex;
    align-items: center;
    height: 46px;
    padding: 0 21px 16px 27px;
    color: #555;
  }

  .status {
    display: flex;
    align-items: center;
    gap: 21px;
    height: 20px;
    padding: 0 28px 0 12px;
    border-left: 1px solid #bbb;
    white-space: nowrap;
  }

  .status.first {
    padding-left: 0;
    border-left: none;
  }

  .status.timer {
    padding: 0 30px 0 34px;
  }

  .status.grip {
    margin-left: auto;
    padding: 4px 0 0 13px;
  }
</style>
